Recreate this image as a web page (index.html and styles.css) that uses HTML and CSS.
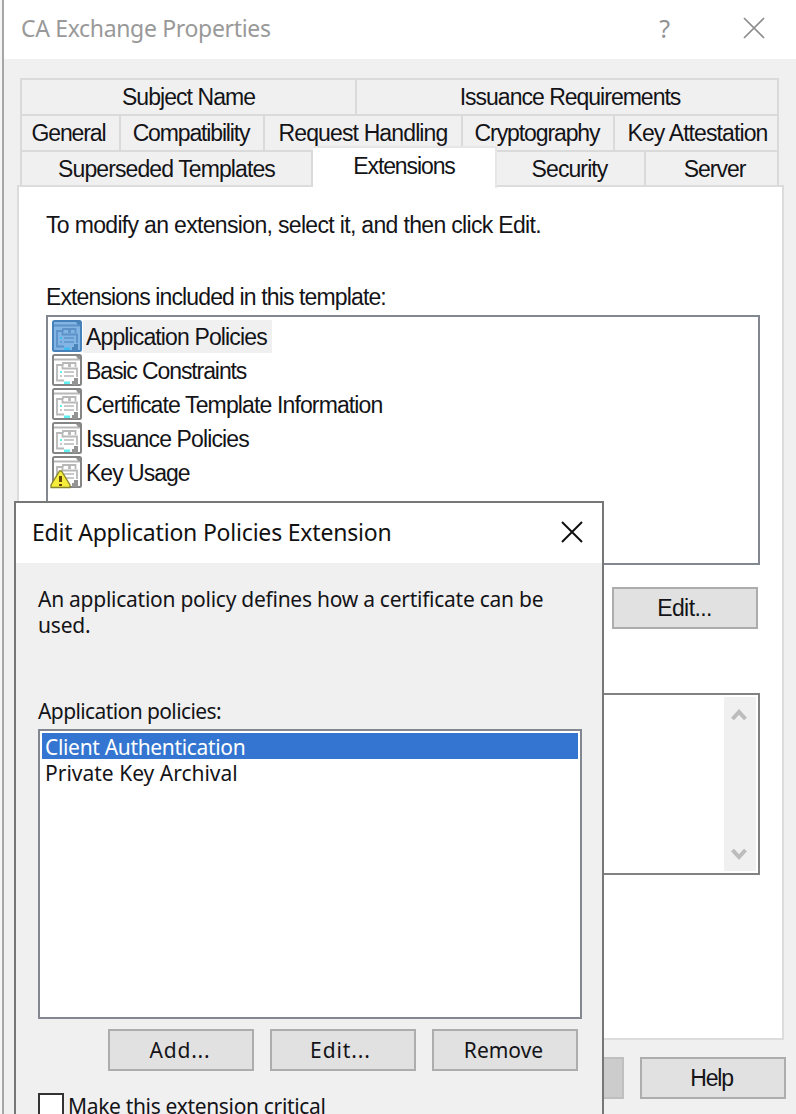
FILE: index.html
```html
<!DOCTYPE html>
<html lang="en">
<head>
<meta charset="utf-8">
<title>CA Exchange Properties</title>
<link rel="stylesheet" href="styles.css">
</head>
<body>
<svg class="defs" aria-hidden="true">
  <symbol id="ext" viewBox="0 0 30 32">
    <rect class="frame" x="1" y="1" width="28" height="30" rx="1.5"/>
    <path class="line" d="M2 5.5H28M12 26.500H5V11H10.500V14.500H25V23M11 11V9H17V13M18 13V9H23.500V13"/>
    <path class="line thin" d="M12 18H22M12 22H22M8 22H10"/>
    <path class="dark" d="M24 2H28V5H26ZM20 27H22V24H26V31H20Z"/>
    <path class="cyan" d="M8 17H10V19H8ZM12 27.500H18V30H12Z"/>
  </symbol>
</svg>
<main class="window">
  <header class="titlebar">
    <h1 class="title"><span class="t-main">CA Exchange Properties</span></h1>
    <span class="help">?</span>
    <svg class="close" viewBox="0 0 22 22"><path d="M1 1L21 21M21 1L1 21"/></svg>
  </header>
  <div class="content">
    <nav class="tabs">
      <div class="row row1"><span class="tab"><b class="t1">Subject Name</b></span><span class="tab"><b class="t2">Issuance Requirements</b></span></div>
      <div class="row row2"><span class="tab"><b class="t3">General</b></span><span class="tab"><b class="t4">Compatibility</b></span><span class="tab"><b class="t5">Request Handling</b></span><span class="tab"><b class="t6">Cryptography</b></span><span class="tab"><b class="t7">Key Attestation</b></span></div>
      <div class="row row3"><span class="tab"><b class="t8">Superseded Templates</b></span><span class="tab active"><b class="t9">Extensions</b></span><span class="tab"><b class="t10">Security</b></span><span class="tab"><b class="t11">Server</b></span></div>
    </nav>
    <section class="panel">
      <p class="intro"><b class="t12">To modify an extension, select it, and then click Edit.</b></p>
      <p class="label"><b class="t13">Extensions included in this template:</b></p>
      <ul class="list">
        <li class="selected"><svg><use href="#ext"/></svg><span><b class="t14">Application Policies</b></span></li>
        <li><svg><use href="#ext"/></svg><span><b class="t15">Basic Constraints</b></span></li>
        <li><svg><use href="#ext"/></svg><span><b class="t16">Certificate Template Information</b></span></li>
        <li><svg><use href="#ext"/></svg><span><b class="t17">Issuance Policies</b></span></li>
        <li><svg viewBox="0 0 30 32"><use href="#ext"/><path class="warn" d="M7.500 15H9.500L18 29V31.500H-1V29Z"/><path class="bang" d="M7 20H10V26H7ZM7 28H10V30H7Z"/></svg><span><b class="t18">Key Usage</b></span></li>
      </ul>
      <button class="btn edit"><b class="t19">Edit...</b></button>
      <div class="description">
        <div class="scroll">
          <svg viewBox="0 0 16 14"><path d="M1.500 11L8 4L14.500 11"/></svg>
          <svg viewBox="0 0 16 14"><path d="M1.500 3L8 10L14.500 3"/></svg>
        </div>
      </div>
    </section>
    <footer class="actions"><button class="btn disabled"></button><button class="btn"><b class="t20">Help</b></button></footer>
  </div>
</main>
<section class="dialog">
  <header class="dialog-title">
    <h2 class="title"><span class="t-dialog">Edit Application Policies Extension</span></h2>
    <svg class="close dark-x" viewBox="0 0 22 22"><path d="M1 1L21 21M21 1L1 21"/></svg>
  </header>
  <div class="dialog-body">
    <p class="explain"><b class="d1">An application policy defines how a certificate can be</b><br><b class="d2">used.</b></p>
    <p class="policies-label"><b class="d3">Application policies:</b></p>
    <ul class="policies"><li class="current"><b class="d4">Client Authentication</b></li><li><b class="d5">Private Key Archival</b></li></ul>
    <div class="buttons"><button class="btn"><b class="d6">Add...</b></button><button class="btn"><b class="d7">Edit...</b></button><button class="btn"><b class="d8">Remove</b></button></div>
    <label class="critical"><i class="box"></i><b class="d9">Make this extension critical</b></label>
  </div>
</section>
</body>
</html>
```
FILE: styles.css
```css
* { box-sizing: border-box; }
body { margin: 0; width: 796px; height: 1114px; overflow: hidden; position: relative; background: #f5f5f5; font-family: "Liberation Sans", Arial, sans-serif; font-size: 23px; color: #141418; }
b, i { font-weight: normal; font-style: normal; white-space: nowrap; }
h1, h2, p, ul { margin: 0; padding: 0; }
ul { list-style: none; }
svg { display: block; flex: none; }
.defs { display: none; }

.window { height: 1114px; margin-left: 2px; border-left: 2px solid #a6a6a6; background: #f0f0f0; }
.titlebar { height: 59px; background: #fff; display: flex; align-items: center; padding: 0 31px 4px 17px; }
.title { flex: 1; font: 400 23px/30px "Noto Sans", sans-serif; color: #999; white-space: nowrap; }
.help { font: 25px/30px "Noto Sans", sans-serif; color: #929292; margin-right: 73px; }
.close { width: 22px; height: 22px; fill: none; stroke: #8c8c8c; stroke-width: 1.7; }
.content { padding: 19px 12px 0 13px; }

.tabs { width: 759px; margin-left: 3px; border-left: 2px solid #dadada; }
.row { display: grid; height: 36px; grid-template-rows: 36px; }
.row1 { grid-template-columns: 335px 422px; }
.row2 { grid-template-columns: 99px 144px 198px 152px 164px; }
.row3 { grid-template-columns: 291px 184px 149px 133px; }
.tab { border-top: 2px solid #dadada; border-right: 2px solid #dadada; display: flex; align-items: center; justify-content: center; line-height: 28px; }
.tab.active { background: #fff; height: 42px; margin-top: -4px; padding-bottom: 5px; border-color: #e6e6e6; z-index: 1; }
.panel { height: 855px; margin-top: -1px; background: #fff; border: 2px solid #dcdcdc; padding: 23px 22px 0 27px; display: flex; flex-direction: column; }
.intro, .label { line-height: 30px; height: 30px; }
.label { margin-top: 42px; }
.list { height: 250px; margin-top: 3px; border: 2px solid #828790; padding: 3px 4px; }
.list li { display: flex; height: 34px; }
.list svg { width: 30px; height: 32px; overflow: visible; }
.list span { height: 33px; line-height: 35px; padding: 0 5px 0 3px; margin-left: 1px; }
.list .selected span { background: #f0f0f0; }

/* Extension icon, with a blue tint for the selected row */
.list { --frame: #858585; --page: #fff; --line: #b8b8b8; --dark: #949494; --cyan: #5ff0f2; }
.list .selected { --frame: #4781ba; --page: #82b4e4; --line: #5c92c8; --dark: #4b83bb; --cyan: #40bdf2; }
.frame { fill: var(--page); stroke: var(--frame); stroke-width: 2; }
.line { fill: none; stroke: var(--line); stroke-width: 1.8; }
.thin { stroke-width: 1.5; }
.dark { fill: var(--dark); }
.cyan { fill: var(--cyan); }
.warn { fill: #f4ed3c; stroke: #89862b; stroke-width: 1.3; }
.bang { fill: #674700; }

.btn { width: 146px; height: 42px; flex: none; border: 2px solid #adadad; background: #e1e1e1; color: inherit; font: inherit; padding: 0; display: flex; align-items: center; justify-content: center; }
.edit { align-self: flex-end; margin: 22px 2px 0 0; }
.description { height: 182px; margin-top: 64px; border: 2px solid #828282; padding: 2px; display: flex; justify-content: flex-end; }
.scroll { width: 32px; height: 174px; background: #f0f0f0; display: flex; flex-direction: column; justify-content: space-between; align-items: center; padding: 11px 2px 10px 0; }
.scroll svg { width: 16px; height: 14px; fill: none; stroke: #bcbcbc; stroke-width: 4; }
.actions { display: flex; justify-content: flex-end; gap: 16px; padding-top: 17px; margin-right: -2px; }
.disabled { background: #ccc; border-color: #bfbfbf; }

.dialog { position: absolute; left: 14px; top: 501px; width: 590px; height: 640px; background: #f0f0f0; border: 2px solid #777; font-family: "Noto Sans", sans-serif; font-size: 21px; }
.dialog-title { height: 60px; background: #fff; display: flex; align-items: center; padding: 0 19px 2px 16px; }
.dialog-title .title { color: #111; }
.close.dark-x { stroke: #111; stroke-width: 2; }
.dialog-body { padding: 23px 20px 0 22px; }
.explain { line-height: 26px; height: 52px; }
.policies-label { line-height: 26px; margin-top: 60px; }
.policies { height: 290px; margin-top: 5px; border: 2px solid #828790; background: #fff; padding: 2px; line-height: 28px; }
.policies li { height: 26px; padding-left: 3px; }
.policies .current { background: #3375d0; color: #fff; }
.buttons { display: flex; gap: 16px; padding: 10px 0 0 70px; }
.critical { display: flex; align-items: flex-start; gap: 4px; margin-top: 22px; line-height: 27px; }
.box { width: 26px; height: 26px; border: 2px solid #333; background: #fff; }

/* Tracking per string */
.t-main { letter-spacing: -0.33px; }
.t-dialog { letter-spacing: -0.2px; }
.t1 { letter-spacing: -0.95px; }
.t2 { letter-spacing: -1px; padding-left: 6px; }
.t3 { letter-spacing: -1.1px; padding-right: 4px; }
.t4 { letter-spacing: -1.15px; padding-right: 2px; }
.t5 { letter-spacing: -0.87px; }
.t6 { letter-spacing: -1.1px; padding-right: 2px; }
.t7 { letter-spacing: -0.9px; padding-left: 3px; }
.t8 { letter-spacing: -0.9px; }
.t9 { letter-spacing: -1.1px; }
.t10 { letter-spacing: -0.9px; padding-right: 2px; }
.t11 { letter-spacing: -1px; padding-left: 6px; }
.t12 { letter-spacing: -0.67px; }
.t13 { letter-spacing: -0.87px; }
.t14, .t16, .t17 { letter-spacing: -0.87px; }
.t15 { letter-spacing: -1.1px; }
.t18 { letter-spacing: -1px; }
.t19 { letter-spacing: -0.6px; padding-right: 1px; }
.t20 { letter-spacing: -1.2px; padding-right: 3px; }
.d1 { letter-spacing: -0.26px; }
.d2 { letter-spacing: -0.2px; }
.d3 { letter-spacing: -0.6px; }
.d4 { letter-spacing: -0.33px; }
.d6 { letter-spacing: 0.8px; padding-right: 2px; }
.d7 { letter-spacing: 0.9px; padding-right: 5px; }
.d8 { padding-right: 3px; }
.d9 { letter-spacing: -0.33px; }
```
